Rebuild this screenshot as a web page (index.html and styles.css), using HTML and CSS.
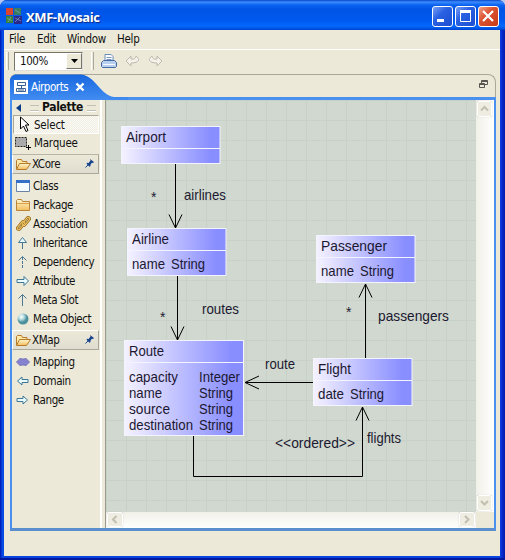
FILE: index.html
```html
<!DOCTYPE html>
<html lang="en">
<head>
<meta charset="utf-8">
<title>XMF-Mosaic</title>
<link rel="stylesheet" href="styles.css">
</head>
<body>
<svg width="0" height="0" class="defs">
  <defs>
    <linearGradient id="fold" x1="0" y1="0" x2="0" y2="1"><stop offset="0" stop-color="#fff6cf"/><stop offset="1" stop-color="#f3bd5c"/></linearGradient>
    <symbol id="pin" viewBox="0 0 10 10"><path d="M5 1l4 3-1 1-1-.3L5.5 6.500l0 1.500-1 .7-3-3 .7-1 1.500.2L5.500 2.500z" fill="#17428c"/><path d="M3 7L.5 9.500" stroke="#17428c"/></symbol>
    <symbol id="open" viewBox="0 0 16 14"><path d="M1.500 12V3.500l1-1h4l1 2h4.500v3" fill="#ffe9a6" stroke="#b87b2c"/><path d="M1.500 12.500l3-6h11l-4 6z" fill="url(#fold)" stroke="#b87b2c"/></symbol>
    <symbol id="right" viewBox="0 0 14 12"><path d="M1 4.500h7V1.500L12.500 6 8 10.500V7.500H1z" fill="#e9fbff" stroke="#3d7795"/></symbol>
  </defs>
</svg>
<div class="window">
  <header class="title">
    <svg class="logo" width="16" height="16"><path fill="#db432c" d="M0 0h7v7H0z"/><path fill="#397c61" d="M8 0h7v7H8z"/><path fill="#3a823b" d="M0 8h7v7H0z"/><path fill="#29288d" d="M8 8h8v8H8z"/><path d="M1 10l5 3M2 14l3-5M9 10l6 3M9 14l5-5M9 2l5 3" stroke="#85a6b8" stroke-width=".7"/></svg>
    <span class="caption">XMF-Mosaic</span>
    <div class="winbtns">
      <svg class="wb" width="21" height="21"><path fill="#fff" d="M5 13h7v3H5z"/></svg>
      <svg class="wb" width="21" height="21"><path fill="none" stroke="#fff" d="M5 5.500h10.500v10H5.500V5"/><path fill="#fff" d="M5 4h11v3H5z"/></svg>
      <svg class="wb close" width="21" height="21"><path stroke="#fff" stroke-width="2.200" d="M5 5l10 10M15 5L5 15"/></svg>
    </div>
  </header>
  <div class="client">
    <nav class="menu"><span class="m1">File</span><span class="m2">Edit</span><span class="m3">Window</span><span>Help</span></nav>
    <div class="toolbar">
      <i class="sep"></i>
      <div class="combo"><span>100%</span><b><svg width="7" height="4"><path d="M0 0h7L3.500 4z"/></svg></b></div>
      <i class="sep sep2"></i>
      <svg class="print" width="16" height="16"><path d="M4 7V1.500h6l2 2V7" fill="#fff" stroke="#6c8cba"/><path d="M5.500 4.500h5M5.500 6.500h5" stroke="#7595c0"/><path d="M2.500 7.500h11l2 2v4l-1 1h-13l-1-1v-4z" fill="#b8cfed" stroke="#446ba4"/><path d="M2 11.500h12" stroke="#f5faff"/></svg>
      <svg class="undo" width="16" height="14"><path d="M1 7l5-5v3c3 1 5-1 5-3 4 3 4 7-5 7v3z" fill="#f3f1e8" stroke="#bdbbb0"/></svg>
      <svg class="redo" width="16" height="14"><path d="M15 7l-5-5v3C7 6 5 4 5 2 1 5 1 9 10 9v3z" fill="#f3f1e8" stroke="#bdbbb0"/></svg>
    </div>
    <section class="folder">
      <div class="tabs">
        <svg class="tabshape" width="118" height="26"><defs><linearGradient id="tg" x1="0" y1="0" x2="0" y2="1"><stop offset="0" stop-color="#1767df"/><stop offset="1" stop-color="#428df1"/></linearGradient></defs><path fill="url(#tg)" d="M0 26V5L2 2 5 .5H70C84 0 90 21 104 23H118V26z"/></svg>
        <div class="tab">
          <svg width="14" height="14"><path fill="#fff" d="M0 0h14v14H0z"/><path d="M3.500 2.500h8v3h-8zM2.500 8.500h9v3h-9zM7.500 5v3M4 10h6" fill="none" stroke="#3b6092"/></svg>
          <span>Airports</span>
          <svg width="10" height="10"><path d="M1.500 1.500l7 7M8.500 1.500l-7 7" stroke="#fff" stroke-width="2.400"/></svg>
        </div>
        <svg class="restore" width="9" height="9"><path d="M2.500 3V.5h6v4H6M3 1.500h5M.5 3.500h5v4h-5zM1 4.500h4" fill="none" stroke="#56554f"/></svg>
      </div>
      <div class="body">
        <aside class="palette">
          <div class="phead"><svg width="5" height="8"><path d="M5 0v8L0 4z" fill="#0b3b86"/></svg><i></i><b>Palette</b><i></i></div>
          <div class="tool select"><svg width="16" height="17"><path d="M4.500 1v12l3-3 2.500 5.500 2-1L9.500 9H13z" fill="#fff" stroke="#000"/></svg><span>Select</span></div>
          <div class="tool marquee"><svg width="16" height="16"><path d="M.5 2.500h11v9H.5z" fill="#aaa" stroke="#222" stroke-dasharray="2 1"/><path d="M13.500 10v5M11 12.500h5" stroke="#000"/></svg><span>Marquee</span></div>
          <div class="group"><svg width="16" height="14"><use href="#open"/></svg><span>XCore</span><svg class="pin" width="10" height="10"><use href="#pin"/></svg></div>
          <div class="items">
            <div><svg width="14" height="12"><path d="M.5.5h13v11H.5z" fill="#f6fbff" stroke="#6b83a8"/><path d="M0 0h14v3H0z" fill="#356fc6"/></svg><span>Class</span></div>
            <div><svg width="14" height="12"><path d="M.5 11.500v-10l1-1h4l1 2h7v9z" fill="url(#fold)" stroke="#bc8437"/><path d="M1 4.500h12" stroke="#d8a04b"/></svg><span>Package</span></div>
            <div><svg width="16" height="16" class="link"><g fill="none" stroke="#96691a" stroke-width="2.400"><rect x="0" y="8" width="10" height="3" rx="1.500" transform="rotate(-50 5 9.500)"/><rect x="5" y="4" width="10" height="3" rx="1.500" transform="rotate(-50 10 5.500)"/></g><g fill="none" stroke="#f3cb6c" stroke-width="1"><rect x="0" y="8" width="10" height="3" rx="1.500" transform="rotate(-50 5 9.500)"/><rect x="5" y="4" width="10" height="3" rx="1.500" transform="rotate(-50 10 5.500)"/></g></svg><span>Association</span></div>
            <div><svg width="14" height="14"><path d="M6.500 6v7M2.500 6.500h8l-4-5z" fill="#e3f8ff" stroke="#4b7894"/></svg><span>Inheritance</span></div>
            <div><svg width="14" height="14"><path d="M2.500 5.500l4-4 4 4" fill="none" stroke="#4b7894"/><path d="M6.500 2v12" stroke="#4b7894" stroke-dasharray="3 1"/></svg><span>Dependency</span></div>
            <div><svg width="14" height="12"><use href="#right"/></svg><span>Attribute</span></div>
            <div><svg width="14" height="14"><path d="M2.500 5.500l4-4 4 4M6.500 2v11" fill="none" stroke="#4b7894"/></svg><span>Meta Slot</span></div>
            <div><svg width="14" height="14"><defs><radialGradient id="ball" cx=".35" cy=".3"><stop stop-color="#fff"/><stop offset=".5" stop-color="#b5dce0"/><stop offset="1" stop-color="#4d909d"/></radialGradient></defs><circle cx="7" cy="7" r="5.500" fill="url(#ball)"/></svg><span>Meta Object</span></div>
          </div>
          <div class="group xmap"><svg width="16" height="14"><use href="#open"/></svg><span>XMap</span><svg class="pin" width="10" height="10"><use href="#pin"/></svg></div>
          <div class="items">
            <div><svg width="14" height="12"><path d="M.5 6l4-4 1 1h3l1-1 4 4-4 4-1-1h-3l-1 1z" fill="#8583cf" stroke="#7472b6"/></svg><span>Mapping</span></div>
            <div><svg width="14" height="10"><path d="M12 3.500H6V1L1.500 5 6 9V6.500h6z" fill="#e9fbff" stroke="#3d7795"/></svg><span>Domain</span></div>
            <div><svg width="14" height="10"><path d="M1 3.500h6V1L11.500 5 7 9V6.500H1z" fill="#e9fbff" stroke="#3d7795"/></svg><span>Range</span></div>
          </div>
        </aside>
        <div class="editor">
          <svg class="canvas" width="370" height="412" viewBox="106 100 370 412">
            <defs>
              <linearGradient id="cls"><stop stop-color="#f4f2ff"/><stop offset=".12" stop-color="#e7e5ff"/><stop offset=".9" stop-color="#898eff"/><stop offset="1" stop-color="#898eff"/></linearGradient>
              <pattern id="grid" x="106" y="100" width="20" height="20" patternUnits="userSpaceOnUse"><path d="M.5 0v20M0 .5h20" stroke="#c8d1c8"/></pattern>
            </defs>
            <rect x="106" y="100" width="370" height="412" fill="#d0d8cf"/>
            <rect x="106" y="100" width="370" height="412" fill="url(#grid)"/>
            <g class="node">
              <rect x="121.500" y="126.500" width="98.500" height="37"/><path d="M121 148.500h99"/>
              <rect x="127.500" y="228.500" width="98.500" height="47"/><path d="M127 250.500h99"/>
              <rect x="124.500" y="340.500" width="119" height="95"/><path d="M124 362.500h119"/>
              <rect x="316.500" y="235.500" width="98.500" height="47"/><path d="M316 257.500h99"/>
              <rect x="313.500" y="358.500" width="98.500" height="47"/><path d="M313 380.500h99"/>
            </g>
            <g class="edge">
              <path d="M175.500 164v64M169 214.500l6.500 13.500 6.500-13.500"/>
              <path d="M177.500 276v64M171 326.500l6.500 13.500 6.500-13.500"/>
              <path d="M365.500 358v-74M359 297.500l6.500-13.500 6.500 13.500"/>
              <path d="M313 382.500h-68M259 376l-14 6.500 14 6.500"/>
              <path d="M193.500 436v40.500h169V407M356 420.500l6.500-13.500 6.500 13.500"/>
            </g>
            <g class="txt">
              <text x="126" y="142" textLength="40" lengthAdjust="spacingAndGlyphs">Airport</text>
              <text x="184" y="200" textLength="42" lengthAdjust="spacingAndGlyphs">airlines</text>
              <text x="151" y="202" class="star">*</text>
              <text x="132" y="244" textLength="37" lengthAdjust="spacingAndGlyphs">Airline</text>
              <text x="132" y="269" textLength="33" lengthAdjust="spacingAndGlyphs">name</text>
              <text x="171" y="269" textLength="34" lengthAdjust="spacingAndGlyphs">String</text>
              <text x="202" y="314" textLength="37" lengthAdjust="spacingAndGlyphs">routes</text>
              <text x="160" y="322" class="star">*</text>
              <text x="129" y="356" textLength="35" lengthAdjust="spacingAndGlyphs">Route</text>
              <text x="129" y="381.500" textLength="49" lengthAdjust="spacingAndGlyphs">capacity</text>
              <text x="199" y="381.500" textLength="41" lengthAdjust="spacingAndGlyphs">Integer</text>
              <text x="129" y="397.500" textLength="33" lengthAdjust="spacingAndGlyphs">name</text>
              <text x="199" y="397.500" textLength="34" lengthAdjust="spacingAndGlyphs">String</text>
              <text x="129" y="413.500" textLength="41" lengthAdjust="spacingAndGlyphs">source</text>
              <text x="199" y="413.500" textLength="34" lengthAdjust="spacingAndGlyphs">String</text>
              <text x="129" y="429.500" textLength="64" lengthAdjust="spacingAndGlyphs">destination</text>
              <text x="199" y="429.500" textLength="34" lengthAdjust="spacingAndGlyphs">String</text>
              <text x="321" y="251" textLength="66" lengthAdjust="spacingAndGlyphs">Passenger</text>
              <text x="321" y="276" textLength="33" lengthAdjust="spacingAndGlyphs">name</text>
              <text x="360" y="276" textLength="34" lengthAdjust="spacingAndGlyphs">String</text>
              <text x="346" y="317" class="star">*</text>
              <text x="378" y="321" textLength="71" lengthAdjust="spacingAndGlyphs">passengers</text>
              <text x="265" y="369" textLength="30" lengthAdjust="spacingAndGlyphs">route</text>
              <text x="318" y="374" textLength="33" lengthAdjust="spacingAndGlyphs">Flight</text>
              <text x="318" y="399" textLength="26" lengthAdjust="spacingAndGlyphs">date</text>
              <text x="350" y="399" textLength="34" lengthAdjust="spacingAndGlyphs">String</text>
              <text x="367" y="443" textLength="34" lengthAdjust="spacingAndGlyphs">flights</text>
              <text x="275" y="448" textLength="80" lengthAdjust="spacingAndGlyphs">&lt;&lt;ordered&gt;&gt;</text>
            </g>
          </svg>
          <div class="vbar"><svg class="sb" width="15" height="16"><path d="M4 9.500L7.500 6 11 9.500"/></svg><svg class="sb" width="15" height="16"><path d="M4 6l3.500 3.500L11 6"/></svg></div>
          <div class="hbar"><svg class="sb" width="16" height="15"><path d="M9.500 4L6 7.500 9.500 11"/></svg><svg class="sb" width="16" height="15"><path d="M6 4l3.500 3.500L6 11"/></svg></div>
          <div class="corner"></div>
        </div>
      </div>
    </section>
  </div>
</div>
</body>
</html>
```
FILE: styles.css
```css
* { box-sizing: border-box; }
body { margin: 0; background: #b7c8ee; font: 11.5px "DejaVu Sans Condensed", "DejaVu Sans", sans-serif; letter-spacing: -0.4px; color: #111; overflow: hidden; }
svg { display: block; flex: none; }
.defs { position: absolute; }
.window { width: 505px; height: 560px; display: flex; flex-direction: column; background: linear-gradient(90deg, #0022ba 0, #0022ba 1px, #0550ea 2px, #0846dd 4px, #0846dd 500px, #0a30dc 501px, #001aa8 505px); border-bottom: 2px solid #0018a0; border-radius: 7px 7px 0 0; }
.title { height: 30px; flex: none; display: flex; align-items: center; padding: 3px 6px 0 6px; border-radius: 7px 7px 0 0; background: linear-gradient(#0846c8 0, #3c8cff 2px, #0a62f0 5px, #0055e5 9px, #0058ee 20px, #0468ff 26px, #0050dc 29px, #003dd0 30px); }
.logo { margin-top: -1px; }
.caption { margin-left: 4px; color: #fff; font: bold 13px "Open Sans", sans-serif; letter-spacing: -0.4px; text-shadow: 1px 1px 1px #0a2a80; }
.winbtns { margin-left: auto; display: flex; gap: 2px; }
.wb { border: 1px solid #fff; border-radius: 3px; background: linear-gradient(135deg, #789ff5, #2960e2 40%, #1c4ed0); width: 21px; }
.close { background: linear-gradient(135deg, #f0a084, #dc5331 40%, #c63b18); }
.wb path { transform: translate(-1px, -1px); }
.client { flex: 1; margin: 0 5px 2px 4px; background: #ece9d8; display: flex; flex-direction: column; }
.menu { height: 20px; flex: none; border-bottom: 1px solid #fff; display: flex; padding: 2px 0 0 5px; line-height: 15px; letter-spacing: -0.3px; }
.m1 { width: 28px; }
.m2 { width: 30px; }
.m3 { width: 50px; }
.toolbar { height: 24px; flex: none; display: flex; align-items: center; padding: 0 0 2px 2px; }
.sep { width: 3px; height: 18px; border-right: 1px solid #aca899; border-left: 1px solid #fff; }
.combo { width: 69px; height: 19px; margin-left: 5px; background: #fff; border: 1px solid #77756a; border-right-color: #ddd; border-bottom-color: #ddd; display: flex; align-items: center; padding-left: 5px; }
.combo b { margin-left: auto; width: 16px; height: 16px; background: #ece9d8; border: 1px solid #fff; border-right-color: #77756a; border-bottom-color: #77756a; display: grid; place-items: center; }
.sep2 { margin-left: 8px; }
.print { margin-left: 7px; }
.undo { margin-left: 8px; }
.redo { margin-left: 6px; }
.folder { width: 486px; margin-left: 6px; height: 457px; flex: none; display: flex; flex-direction: column; border: 1px solid #aca899; border-radius: 6px 8px 0 0; border-bottom: 0; }
.tabs { height: 22px; flex: none; display: flex; align-items: center; position: relative; }
.tabshape { position: absolute; left: -1px; top: -1px; }
.tab { position: relative; z-index: 1; display: flex; align-items: center; gap: 3px; margin: 2px 0 0 3px; color: #fff; }
.tab span { width: 41px; white-space: nowrap; letter-spacing: -0.45px; }
.restore { margin: -3px 7px 0 auto; }
.body { flex: 1; margin: 0 -1px; border: solid #4a90ee; border-width: 3px 2px 3px; border-bottom-color: #5b8ecd; display: flex; }
.palette { width: 94px; flex: none; border-right: 1px solid #9b998e; background: linear-gradient(90deg, #ece9d8 88px, #fff 88px, #fff 90px, #ece9d8 90px); padding-right: 5px; display: flex; flex-direction: column; }
.phead { height: 15px; display: flex; align-items: center; padding: 0 0 0 4px; gap: 3px; }
.phead b { font-size: 12px; letter-spacing: -0.35px; width: 42px; white-space: nowrap; line-height: 13px; }
.phead i { width: 9px; height: 6px; border: solid #c4c1b2; border-width: 1px 0; box-shadow: 0 1px #fff; }
.phead svg { margin-right: 6px; }
.tool { display: flex; align-items: center; padding-left: 3px; height: 19px; width: 86px; margin-left: 1px; letter-spacing: -0.2px; }
.tool span { margin-left: 3px; }
.select { padding-left: 2px; border: 1px solid #aca899; border-right-color: #fff; border-bottom-color: #fff; background: repeating-conic-gradient(#f0eee2 0 25%, #fbfaf5 0 50%) 0 0 / 2px 2px; }
.select span { margin-left: 2px; }
.marquee { padding-left: 2px; margin-bottom: 2px; height: 18px; }
.group { height: 20px; width: 87px; flex: none; background: linear-gradient(#ece9d8, #dfddcf); border: 1px solid #fff; border-right-color: #aca899; border-bottom-color: #aca899; border-top-color: #b8b5a7; display: flex; align-items: center; padding-left: 2px; }
.group span { margin-left: 1px; }
.pin { margin: -2px 3px 0 auto; }
.items { padding: 2px 0 0 4px; }
.items div { height: 19px; display: flex; align-items: center; white-space: nowrap; }
.items span { margin-left: 3px; }
.items .link { width: 16px; margin-right: -2px; }
.xmap { margin-top: 2px; border-top-color: #fff; }
.editor { display: grid; grid-template: 412px 16px / 370px 18px; }
.vbar, .hbar { display: flex; justify-content: space-between; padding: 1px; }
.vbar { flex-direction: column; background: linear-gradient(90deg, #f1f0e8, #fffffe); }
.hbar { background: linear-gradient(#f1f0e8, #fffffe); padding: 0 1px; }
.sb { border: 1px solid #fff; border-radius: 2px; background: #efede2; box-shadow: 0 0 1px #aaa; }
.sb path { fill: none; stroke: #c1bfae; stroke-width: 2; transform: translate(-1px, -1px); }
.corner { background: #ece9d8; }
.node rect { fill: url(#cls); stroke: #f4f4ff; }
.node path { stroke: #f4f4ff; }
.edge path { fill: none; stroke: #000; }
.txt { font: 15px "Liberation Sans", sans-serif; letter-spacing: 0; fill: #1c1830; }
.star { font-size: 14px; }
```
